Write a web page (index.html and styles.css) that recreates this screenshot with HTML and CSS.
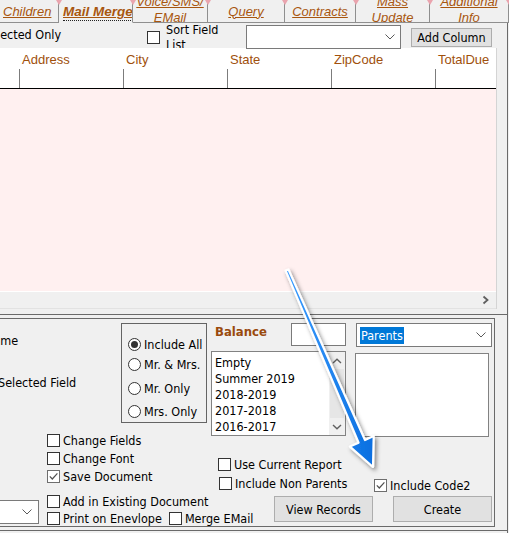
FILE: index.html
```html
<!DOCTYPE html>
<html>
<head>
<meta charset="utf-8">
<title>Mail Merge</title>
<link rel="stylesheet" href="styles.css">
</head>
<body>
<div class="window">
  <div class="tabs">
    <div class="tab w-children"><div class="tw start"><span class="tl">Children</span></div></div>
    <div class="tab w-mail active"><div class="tw start"><span class="focus"><span class="tl">Mail Merge</span></span></div></div>
    <div class="tab w-voice"><div class="tw two"><span class="tl">Voice/SMS/</span><span class="tl">EMail</span></div></div>
    <div class="tab w-query"><div class="tw"><span class="tl">Query</span></div></div>
    <div class="tab w-contracts"><div class="tw"><span class="tl">Contracts</span></div></div>
    <div class="tab w-mass"><div class="tw two"><span class="tl">Mass</span><span class="tl">Update</span></div></div>
    <div class="tab w-add"><div class="tw two"><span class="tl">Additional</span><span class="tl">Info</span></div></div>
  </div>

  <div class="page">
    <div class="toolbar">
      <div class="tb-sel"><span class="sel-only">Selected Only</span></div>
      <div class="tb-sort">
        <span class="cb"></span>
        <div class="sort-label"><span>Sort Field</span><span>List</span></div>
      </div>
      <div class="tb-combo">
        <div class="combo combo-fields">
          <span class="combo-text"></span>
          <svg class="chev" width="10" height="6" viewBox="0 0 10 6"><path d="M0.5 0.5L5 5L9.5 0.5"/></svg>
        </div>
      </div>
      <div class="tb-btn"><button class="btn btn-add">Add Column</button></div>
    </div>

    <div class="grid">
      <div class="ghead">
        <div class="gcol gfirst"><div class="cap"></div><div class="sep"></div></div>
        <div class="gcol"><div class="cap">Address</div><div class="sep"></div></div>
        <div class="gcol"><div class="cap">City</div><div class="sep"></div></div>
        <div class="gcol"><div class="cap">State</div><div class="sep"></div></div>
        <div class="gcol"><div class="cap">ZipCode</div><div class="sep"></div></div>
        <div class="gcol glast"><div class="cap">TotalDue</div><div class="sep"></div></div>
      </div>
      <div class="gbody"></div>
      <div class="hscroll">
        <svg width="8" height="10" viewBox="0 0 8 10"><path d="M1.5 1.5L5.5 5L1.5 8.5"/></svg>
      </div>
    </div>

    <div class="panel">
      <div class="group">
        <div class="top">
          <div class="labels">
            <div class="lbl-name"><span class="name-text">Name</span></div>
            <div class="lbl-field">Selected Field</div>
          </div>

          <div class="radiobox">
            <label class="radio"><span class="rb on"></span>Include All</label>
            <label class="radio"><span class="rb"></span>Mr. &amp; Mrs.</label>
            <label class="radio"><span class="rb"></span>Mr. Only</label>
            <label class="radio"><span class="rb"></span>Mrs. Only</label>
          </div>

          <div class="balance">
            <div class="bal-head">
              <span class="bal-title">Balance</span>
              <span class="textbox"></span>
            </div>
            <div class="listbox bal-list">
              <div class="items">
                <div>Empty</div>
                <div>Summer 2019</div>
                <div>2018-2019</div>
                <div>2017-2018</div>
                <div>2016-2017</div>
              </div>
              <div class="vscroll">
                <div class="sbtn"><svg width="10" height="6" viewBox="0 0 10 6"><path d="M1 5L5 1.2L9 5"/></svg></div>
                <div class="thumb"></div>
                <div class="sbtn"><svg width="10" height="6" viewBox="0 0 10 6"><path d="M1 1L5 4.8L9 1"/></svg></div>
              </div>
            </div>
          </div>

          <div class="parents">
            <div class="combo combo-parents">
              <span class="hl">Parents</span>
              <svg class="chev" width="10" height="6" viewBox="0 0 10 6"><path d="M0.5 0.5L5 5L9.5 0.5"/></svg>
            </div>
            <div class="listbox plist"></div>
          </div>
        </div>

        <div class="bottom">
          <div class="bcol1">
            <div class="combo combo-small">
              <svg class="chev" width="10" height="6" viewBox="0 0 10 6"><path d="M0.5 0.5L5 5L9.5 0.5"/></svg>
            </div>
          </div>
          <div class="bcol2">
            <label class="check"><span class="cb"></span>Change Fields</label>
            <label class="check"><span class="cb"></span>Change Font</label>
            <label class="check"><span class="cb on"><svg width="11" height="11" viewBox="0 0 11 11"><path d="M1.8 5.4L4.3 8L9.4 2.4"/></svg></span>Save Document</label>
            <label class="check c-add"><span class="cb"></span>Add in Existing Document</label>
            <div class="check c-print">
              <label class="check-in"><span class="cb"></span>Print on Enevlope</label>
              <label class="check-in c-merge"><span class="cb"></span>Merge EMail</label>
            </div>
          </div>
          <div class="bcol3">
            <label class="check c-use"><span class="cb"></span>Use Current Report</label>
            <div class="row2">
              <label class="check c-nonp"><span class="cb"></span>Include Non Parents</label>
              <label class="check c-code2"><span class="cb on"><svg width="11" height="11" viewBox="0 0 11 11"><path d="M1.8 5.4L4.3 8L9.4 2.4"/></svg></span>Include Code2</label>
            </div>
            <div class="btnrow">
              <button class="btn btn-view">View Records</button>
              <button class="btn btn-create">Create</button>
            </div>
          </div>
        </div>
      </div>
    </div>
  </div>

  <svg class="arrow" width="509" height="533" viewBox="0 0 509 533">
    <defs>
      <filter id="shadow" x="-20%" y="-20%" width="140%" height="140%">
        <feDropShadow dx="2" dy="2.5" stdDeviation="2" flood-color="#000" flood-opacity="0.45"/>
      </filter>
      <linearGradient id="blue" x1="0" y1="0" x2="1" y2="0">
        <stop offset="0" stop-color="#3b9cff"/>
        <stop offset="1" stop-color="#0a6fe0"/>
      </linearGradient>
    </defs>
    <polygon filter="url(#shadow)" fill="url(#blue)" stroke="#ffffff" stroke-width="2.2" stroke-linejoin="round"
      points="288.4,269.4 365,440 373.7,436.1 373,467 349.9,446.6 358.6,442.8 285.6,270.6"/>
  </svg>
</div>
</body>
</html>
```

FILE: styles.css
```css
* { box-sizing: border-box; }
html, body { margin: 0; padding: 0; }
body {
  width: 509px;
  height: 533px;
  overflow: hidden;
  background: #f0f0f0;
  font-family: "DejaVu Sans Condensed", "DejaVu Sans", sans-serif;
  font-size: 12.5px;
  color: #000;
}
.window {
  position: relative;
  width: 509px;
  height: 533px;
  overflow: hidden;
  background: #f0f0f0;
}

/* ---------- tabs ---------- */
.tabs {
  display: flex;
  height: 23px;
  font-family: "Liberation Sans", Arial, sans-serif;
  font-size: 13px;
  font-style: italic;
  color: #a8560f;
}
.tab {
  position: relative;
  height: 23px;
  flex: none;
  border-right: 1px solid #8f8f8f;
  border-bottom: 1px solid #8f8f8f;
}
.tab::after {
  content: "";
  position: absolute;
  right: -4px;
  top: 0;
  width: 0;
  height: 0;
  border-left: 3.5px solid transparent;
  border-right: 3.5px solid transparent;
  border-top: 5px solid #eaa4ae;
  z-index: 2;
}
.tab.active { border-bottom-color: transparent; font-weight: bold; font-size: 13.5px; }
.w-children { width: 59px; }
.w-mail { width: 74px; }
.w-voice { width: 75px; }
.w-query { width: 77px; }
.w-contracts { width: 71px; }
.w-mass { width: 74px; }
.w-add { width: 79px; }

.tw {
  height: 22px;
  overflow: hidden;
  display: flex;
  align-items: center;
  justify-content: center;
  line-height: 15px;
  white-space: nowrap;
}
.tw.start { justify-content: flex-start; padding-left: 3px; }
.w-mail .tw { padding-left: 4px; }
.tw.two { flex-direction: column; line-height: 16px; padding-bottom: 2px; }
.tl { text-decoration: underline; }
.focus {
  display: inline-block;
  border-bottom: 1px dotted #222;
  padding-bottom: 1px;
  margin-top: 3px;
}

/* ---------- page ---------- */
.page {
  width: 508px;
  height: 510px;
  border-right: 1px solid #6a6a6a;
}
.toolbar {
  height: 25px;
  display: grid;
  grid-template-columns: 147px 99px 165px 81px;
  align-items: start;
}
.tb-sel { overflow: hidden; height: 25px; }
.sel-only {
  display: block;
  margin-left: -17px;
  margin-top: 4px;
  line-height: 16px;
  white-space: nowrap;
}
.tb-sort {
  display: flex;
  align-items: flex-start;
  height: 25px;
}
.tb-sort .cb { margin-top: 8px; }
.sort-label {
  margin-left: 3px;
  margin-top: 2px;
  height: 23px;
  overflow: hidden;
  display: flex;
  flex-direction: column;
  justify-content: center;
  line-height: 15px;
  white-space: nowrap;
}
.tb-combo { padding-top: 2px; }
.combo {
  position: relative;
  display: flex;
  align-items: center;
  background: #fff;
  border: 1px solid #7a7a7a;
}
.combo .chev {
  position: absolute;
  top: 50%;
  margin-top: -3px;
  right: 5px;
  fill: none;
  stroke: #5a5a5a;
  stroke-width: 1;
}
.combo-fields { width: 155px; height: 24px; z-index: 1; }
.tb-btn { padding-top: 5px; }
.btn {
  font: inherit;
  color: #000;
  background: #e1e1e1;
  border: 1px solid #adadad;
  padding: 0;
  margin: 0;
}
.btn-add { width: 81px; height: 19px; line-height: 16px; }

/* ---------- grid ---------- */
.grid {
  width: 497px;
  border-right: 1px solid #d4d4d4;
}
.ghead {
  display: flex;
  background: #fff;
  height: 41px;
  border-bottom: 1px solid #000;
  font-family: "Liberation Sans", Arial, sans-serif;
  font-size: 13px;
  color: #a0500c;
}
.gcol { width: 104px; flex: none; }
.gfirst { width: 19px; }
.glast { width: 61px; }
.cap {
  height: 21px;
  padding-left: 3px;
  padding-top: 4px;
  line-height: 15px;
  white-space: nowrap;
}
.sep { height: 19px; border-left: 1px solid #7c7c7c; }
.gfirst .sep { border-left: none; }
.gbody {
  height: 203px;
  background: #fff0f0;
  border-bottom: 1px solid #fff;
}
.hscroll {
  height: 17px;
  background: #f0f0f0;
  border-bottom: 1px solid #e2e2e2;
  display: flex;
  justify-content: flex-end;
  align-items: center;
  padding-right: 6px;
}
.hscroll svg { fill: none; stroke: #5f5f5f; stroke-width: 1.8; }

/* ---------- panel ---------- */
.panel {
  margin-top: 5px;
  border-top: 1px solid #6a6a6a;
  border-bottom: 1px solid #6a6a6a;
  padding: 3px 0;
}
.group {
  width: 495px;
  height: 209px;
  border-top: 1px solid #6a6a6a;
  border-right: 1px solid #6a6a6a;
  border-bottom: 1px solid #6a6a6a;
}
.top {
  height: 112px;
  display: flex;
  align-items: flex-start;
}
.labels { width: 121px; flex: none; line-height: 16px; white-space: nowrap; overflow: hidden; }
.lbl-name { margin-top: 14px; }
.name-text { display: block; margin-left: -15px; }
.lbl-field { margin-top: 26px; margin-left: -2px; }

.radiobox {
  width: 86px;
  height: 100px;
  margin-top: 4px;
  flex: none;
  border: 1px solid #646464;
  padding-left: 6px;
}
.radio {
  display: flex;
  align-items: center;
  height: 16px;
  white-space: nowrap;
}
.radio:nth-child(1) { margin-top: 12px; }
.radio:nth-child(2) { margin-top: 4px; }
.radio:nth-child(3) { margin-top: 8px; }
.radio:nth-child(4) { margin-top: 7px; }
.rb {
  width: 13px;
  height: 13px;
  border: 1px solid #333;
  border-radius: 50%;
  background: #fff;
  margin-right: 3px;
  flex: none;
  display: flex;
  align-items: center;
  justify-content: center;
}
.rb.on::after {
  content: "";
  width: 7px;
  height: 7px;
  border-radius: 50%;
  background: #333;
}

.balance { width: 135px; margin-left: 4px; margin-top: 4px; flex: none; }
.bal-head { display: flex; height: 23px; }
.bal-title {
  width: 80px;
  padding-left: 4px;
  padding-top: 1px;
  font-weight: bold;
  font-size: 13px;
  color: #9a4a0e;
  line-height: 16px;
}
.textbox {
  width: 55px;
  height: 23px;
  background: #fff;
  border: 1px solid #7a7a7a;
}
.listbox {
  background: #fff;
  border: 1px solid #828282;
}
.bal-list {
  margin-top: 5px;
  height: 85px;
  display: flex;
  overflow: hidden;
}
.items {
  flex: 1;
  padding-left: 3px;
  padding-top: 3px;
  line-height: 16px;
  white-space: nowrap;
}
.vscroll {
  width: 16px;
  flex: none;
  background: #f0f0f0;
  display: flex;
  flex-direction: column;
}
.sbtn {
  height: 17px;
  display: flex;
  align-items: center;
  justify-content: center;
}
.sbtn svg { fill: none; stroke: #606060; stroke-width: 1.4; }
.thumb { flex: 1; background: #e6e6e6; margin: 0 1px; }

.parents { margin-left: 9px; margin-top: 4px; width: 137px; flex: none; }
.combo-parents { width: 136px; height: 24px; margin-left: 1px; padding-left: 3px; }
.hl {
  background: #0078d7;
  color: #fff;
  line-height: 17px;
  padding: 0 1px;
}
.plist { margin-top: 6px; width: 134px; height: 84px; }

.bottom {
  height: 95px;
  display: flex;
  align-items: flex-start;
}
.bcol1 { width: 47px; flex: none; }
.combo-small { width: 40px; height: 24px; margin-left: -1px; margin-top: 69px; }
.combo-small .chev { right: 6px; }
.bcol2 { width: 171px; flex: none; }
.check {
  display: flex;
  align-items: center;
  height: 18px;
  white-space: nowrap;
}
.check-in { display: flex; align-items: center; white-space: nowrap; }
.cb {
  width: 13px;
  height: 13px;
  flex: none;
  border: 1px solid #333;
  background: #fff;
  margin-right: 3px;
  display: flex;
  align-items: center;
  justify-content: center;
}
.cb.on { border-color: #6e6e6e; }
.cb svg { fill: none; stroke: #505050; stroke-width: 1.2; }
.c-add { margin-top: 8px; height: 17px; }
.c-print { height: 17px; }
.c-merge { margin-left: 7px; }
.bcol3 { flex: 1; }
.c-use { margin-top: 24px; }
.row2 { display: flex; align-items: flex-start; }
.c-nonp { width: 156px; padding-left: 1px; margin-top: 1px; }
.c-code2 { margin-top: 3px; }
.btnrow { display: flex; margin-top: 2px; padding-left: 56px; gap: 20px; }
.btn-view, .btn-create { width: 99px; height: 26px; }

/* ---------- annotation arrow ---------- */
.arrow {
  position: absolute;
  left: 0;
  top: 0;
  pointer-events: none;
}
```
